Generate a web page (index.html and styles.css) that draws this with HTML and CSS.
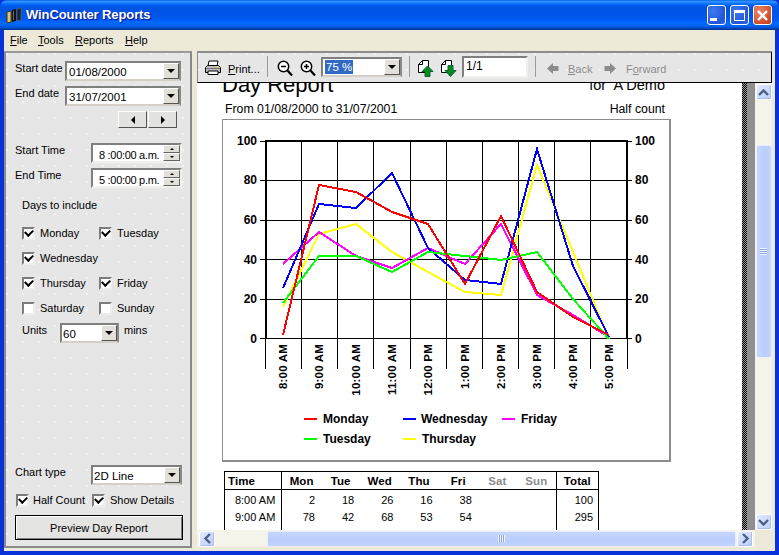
FILE: index.html
```html
<!DOCTYPE html>
<html lang="en">
<head>
<meta charset="utf-8">
<title>WinCounter Reports</title>
<link rel="stylesheet" href="styles.css">
</head>
<body>
<div class="window">
  <header class="titlebar">
    <svg class="app-icon" width="17" height="17" viewBox="0 0 17 17">
      <path d="M1 5l4-1v11l-4 1z" fill="#e8c84a" stroke="#333"/>
      <path d="M6 3l4-1v12l-4 1z" fill="#111"/>
      <path d="M11 2l4-1v12l-4 1z" fill="#222" stroke="#777" stroke-width=".5"/>
      <path d="M7 4h1v9H7z" fill="#666"/>
    </svg>
    <span class="app-title">WinCounter Reports</span>
    <div class="caption-buttons">
      <button class="cap cap-min"><span class="glyph-min"></span></button>
      <button class="cap cap-max"><span class="glyph-max"></span></button>
      <button class="cap cap-close">
        <svg width="13" height="13" viewBox="0 0 13 13"><path d="M2 2l9 9M11 2l-9 9" stroke="#fff" stroke-width="2.4"/></svg>
      </button>
    </div>
  </header>

  <nav class="menubar">
    <span class="menu-item"><u>F</u>ile</span>
    <span class="menu-item"><u>T</u>ools</span>
    <span class="menu-item"><u>R</u>eports</span>
    <span class="menu-item"><u>H</u>elp</span>
  </nav>

  <div class="main">
    <aside class="panel">
      <div class="row row-date">
        <label class="lbl lbl-date">Start date</label>
        <div class="combo combo-date"><span class="combo-text">01/08/2000</span><span class="combo-btn"><i class="arrow-down"></i></span></div>
      </div>
      <div class="row row-date gap5">
        <label class="lbl lbl-date">End date</label>
        <div class="combo combo-date"><span class="combo-text">31/07/2001</span><span class="combo-btn"><i class="arrow-down"></i></span></div>
      </div>
      <div class="nav-buttons">
        <button class="nav-btn"><i class="arrow-left"></i></button>
        <button class="nav-btn"><i class="arrow-right"></i></button>
      </div>

      <div class="row row-time first-time">
        <label class="lbl lbl-time">Start Time</label>
        <div class="spin"><span class="spin-text">8 :00:00 a.m.</span><span class="spin-btns"><b class="spin-btn"><i class="tiny-up"></i></b><b class="spin-btn"><i class="tiny-down"></i></b></span></div>
      </div>
      <div class="row row-time gap5">
        <label class="lbl lbl-time">End Time</label>
        <div class="spin"><span class="spin-text">5 :00:00 p.m.</span><span class="spin-btns"><b class="spin-btn"><i class="tiny-up"></i></b><b class="spin-btn"><i class="tiny-down"></i></b></span></div>
      </div>

      <div class="days-title">Days to include</div>
      <div class="check-row first-check">
        <span class="check col1 on"></span><span class="check-label w78">Monday</span>
        <span class="check on"></span><span class="check-label">Tuesday</span>
      </div>
      <div class="check-row">
        <span class="check col1 on"></span><span class="check-label">Wednesday</span>
      </div>
      <div class="check-row">
        <span class="check col1 on"></span><span class="check-label w78">Thursday</span>
        <span class="check on"></span><span class="check-label">Friday</span>
      </div>
      <div class="check-row">
        <span class="check col1"></span><span class="check-label w78">Saturday</span>
        <span class="check"></span><span class="check-label">Sunday</span>
      </div>
      <div class="units-row">
        <label class="lbl lbl-units">Units</label>
        <div class="combo combo-units"><span class="combo-text tight">60</span><span class="combo-btn"><i class="arrow-down"></i></span></div>
        <span class="lbl lbl-mins">mins</span>
      </div>

      <div class="panel-bottom">
        <div class="row row-time">
          <label class="lbl lbl-time">Chart type</label>
          <div class="combo combo-chart"><span class="combo-text tight">2D Line</span><span class="combo-btn"><i class="arrow-down"></i></span></div>
        </div>
        <div class="check-row bottom-check">
          <span class="check col0 on"></span><span class="check-label w59">Half Count</span>
          <span class="check on"></span><span class="check-label">Show Details</span>
        </div>
        <button class="preview">Preview Day Report</button>
      </div>
    </aside>

    <section class="viewer">
      <div class="toolbar">
        <svg class="tb-print tb-icon" width="18" height="16" viewBox="0 0 18 16">
          <path d="M5 1h9l-1 5H4z" fill="#fff" stroke="#000"/>
          <path d="M1.500 7.500l2-2h11l2 2v5h-15z" fill="#bbb" stroke="#000"/>
          <path d="M4 11h10v3.500H4z" fill="#fff" stroke="#000"/>
          <path d="M2 8h14v1H2z" fill="#777"/><path d="M12 7h3v1h-3z" fill="#e8d030"/>
        </svg>
        <span class="tb-text tb-print-label"><u>P</u>rint...</span>
        <span class="tb-sep sep-a"></span>
        <svg class="tb-zoom1 tb-icon" width="16" height="17" viewBox="0 0 16 17">
          <circle cx="6.500" cy="6.500" r="5.200" fill="#fff" stroke="#000" stroke-width="1.500"/>
          <path d="M4 6.500h5" stroke="#000" stroke-width="1.500"/>
          <path d="M10.500 10.500l4.500 5" stroke="#000" stroke-width="2.200"/>
        </svg>
        <svg class="tb-zoom2 tb-icon" width="16" height="17" viewBox="0 0 16 17">
          <circle cx="6.500" cy="6.500" r="5.200" fill="#fff" stroke="#000" stroke-width="1.500"/>
          <path d="M4 6.500h5M6.500 4v5" stroke="#000" stroke-width="1.500"/>
          <path d="M10.500 10.500l4.500 5" stroke="#000" stroke-width="2.200"/>
        </svg>
        <div class="combo combo-zoom"><span class="combo-text sel-wrap"><span class="selected">75 %</span></span><span class="combo-btn"><i class="arrow-down"></i></span></div>
        <span class="tb-sep sep-b"></span>
        <svg class="tb-page1 tb-icon" width="17" height="17" viewBox="0 0 17 17">
          <path d="M1.500 4.500l4-4h6v12h-10z" fill="#fff" stroke="#000"/>
          <path d="M1.500 4.500h4v-4" fill="none" stroke="#000"/>
          <path d="M10.500 6l5.500 5.500h-3v5h-5v-5H5z" fill="#0a8a1e" stroke="#063"/>
        </svg>
        <svg class="tb-page2 tb-icon" width="17" height="17" viewBox="0 0 17 17">
          <path d="M1.500 4.500l4-4h6v12h-10z" fill="#fff" stroke="#000"/>
          <path d="M1.500 4.500h4v-4" fill="none" stroke="#000"/>
          <path d="M8 5.500h5v5h3l-5.500 6-5.500-6h3z" fill="#0a8a1e" stroke="#063"/>
        </svg>
        <div class="page-field">1/1</div>
        <span class="tb-sep sep-c"></span>
        <svg class="tb-back tb-icon" width="12" height="11" viewBox="0 0 12 11"><path d="M0 5.500L6 0v3h5.500v5H6v3z" fill="#8c8c8c"/></svg>
        <span class="tb-text disabled tb-back-label"><u>B</u>ack</span>
        <svg class="tb-fwd tb-icon" width="12" height="11" viewBox="0 0 12 11"><path d="M12 5.500L6 0v3H.5v5H6v3z" fill="#8c8c8c"/></svg>
        <span class="tb-text disabled tb-fwd-label">F<u>o</u>rward</span>
      </div>

      <div class="doc-grid">
        <div class="doc">
          <div class="page">
            <div class="page-head">
              <span class="report-title">Day Report</span>
              <span class="report-for">for&nbsp; A Demo</span>
            </div>
            <div class="page-sub">
              <span>From 01/08/2000 to 31/07/2001</span>
              <span>Half count</span>
            </div>
            <div class="chart-box">
              <svg class="chart" width="446" height="340" viewBox="223 120 446 340">
                <g class="grid-lines">
                  <path d="M265 180.500H627M265 220.500H627M265 259.500H627M265 299.500H627M265 338.500H627"/>
                  <path d="M301.500 141V369M337.500 141V369M373.500 141V369M410.500 141V369M446.500 141V369M482.500 141V369M518.500 141V369M554.500 141V369M590.500 141V369M265.500 339V369M627.500 339V369"/>
                  <path d="M260 141H265M260 180.500H265M260 220.500H265M260 259.500H265M260 299.500H265M260 338.500H265M627 141H632M627 180.500H632M627 220.500H632M627 259.500H632M627 299.500H632M627 338.500H632"/>
                </g>
                <path class="axis" d="M265 141H628M266 141V339M627 141V339"/>

                <g class="val-left">
                  <text x="257" y="145">100</text><text x="257" y="184">80</text><text x="257" y="224">60</text><text x="257" y="264">40</text><text x="257" y="303">20</text><text x="257" y="343">0</text>
                </g>
                <g class="val-right">
                  <text x="635" y="145">100</text><text x="635" y="184">80</text><text x="635" y="224">60</text><text x="635" y="264">40</text><text x="635" y="303">20</text><text x="635" y="343">0</text>
                </g>

                <g class="cat">
                  <text transform="translate(287 344) rotate(-90)">8:00 AM</text>
                  <text transform="translate(323 344) rotate(-90)">9:00 AM</text>
                  <text transform="translate(360 344) rotate(-90)">10:00 AM</text>
                  <text transform="translate(396 344) rotate(-90)">11:00 AM</text>
                  <text transform="translate(432 344) rotate(-90)">12:00 PM</text>
                  <text transform="translate(469 344) rotate(-90)">1:00 PM</text>
                  <text transform="translate(505 344) rotate(-90)">2:00 PM</text>
                  <text transform="translate(541 344) rotate(-90)">3:00 PM</text>
                  <text transform="translate(577 344) rotate(-90)">4:00 PM</text>
                  <text transform="translate(613 344) rotate(-90)">5:00 PM</text>
                </g>

                <polyline class="s-thu" points="283,307 319,234 356,224 392,252 428,272 465,292 501,295 537,165 573,252 609,339"/>
                <polyline class="s-fri" points="283,264 319,232 356,256 392,268 428,248 465,264 501,224 537,295 573,315 609,337"/>
                <polyline class="s-wed" points="283,288 319,204 356,208 392,173 428,248 465,280 501,284 537,149 573,266 609,337"/>
                <polyline class="s-tue" points="283,303 319,256 356,256 392,272 428,252 465,256 501,260 537,252 573,299 609,339"/>
                <polyline class="s-mon" points="283,335 319,185 356,192 392,212 428,224 465,284 501,216 537,292 573,317 609,335"/>

                <g class="legend">
                  <path class="s-mon" d="M304 419H317"/><text x="323" y="423">Monday</text>
                  <path class="s-tue" d="M304 439H317"/><text x="323" y="443">Tuesday</text>
                  <path class="s-wed" d="M403 419H416"/><text x="421" y="423">Wednesday</text>
                  <path class="s-thu" d="M403 439H416"/><text x="422" y="443">Thursday</text>
                  <path class="s-fri" d="M502 419H515"/><text x="521" y="423">Friday</text>
                </g>
              </svg>
            </div>

            <table class="data">
              <thead>
                <tr><th class="c-time">Time</th><th class="c-day">Mon</th><th class="c-day">Tue</th><th class="c-day">Wed</th><th class="c-day">Thu</th><th class="c-day">Fri</th><th class="c-day off">Sat</th><th class="c-day off">Sun</th><th class="c-total">Total</th></tr>
              </thead>
              <tbody>
                <tr><td class="c-time">8:00 AM</td><td>2</td><td>18</td><td>26</td><td>16</td><td>38</td><td></td><td></td><td class="c-total">100</td></tr>
                <tr><td class="c-time">9:00 AM</td><td>78</td><td>42</td><td>68</td><td>53</td><td>54</td><td></td><td></td><td class="c-total">295</td></tr>
                <tr><td class="c-time"></td><td></td><td></td><td></td><td></td><td></td><td></td><td></td><td class="c-total"></td></tr>
              </tbody>
            </table>
          </div>
          <div class="dark-band"></div>
          <div class="gray-band"></div>
        </div>

        <div class="vscroll">
          <span class="sb-btn"><svg width="11" height="7" viewBox="0 0 11 7"><path d="M1 6l4.500-4.500L10 6" fill="none" stroke="#4d6185" stroke-width="2.400"/></svg></span>
          <span class="v-track-a"></span>
          <span class="v-thumb"><i class="grip-h"></i></span>
          <span class="v-track-b"></span>
          <span class="sb-btn"><svg width="11" height="7" viewBox="0 0 11 7"><path d="M1 1l4.500 4.500L10 1" fill="none" stroke="#4d6185" stroke-width="2.400"/></svg></span>
        </div>

        <div class="hscroll">
          <span class="sb-btn"><svg width="7" height="11" viewBox="0 0 7 11"><path d="M6 1L1.500 5.500 6 10" fill="none" stroke="#4d6185" stroke-width="2.400"/></svg></span>
          <span class="h-track-a"></span>
          <span class="h-thumb"><i class="grip-v"></i></span>
          <span class="sb-btn h-right"><svg width="7" height="11" viewBox="0 0 7 11"><path d="M1 1l4.500 4.500L1 10" fill="none" stroke="#4d6185" stroke-width="2.400"/></svg></span>
        </div>
        <div class="corner"></div>
      </div>
    </section>
  </div>
</div>
</body>
</html>
```

FILE: styles.css
```css
* { box-sizing: border-box; }
html, body { margin: 0; padding: 0; }
body { width: 779px; height: 555px; overflow: hidden; background: #0831d9; }
button { font: inherit; color: inherit; padding: 0; margin: 0; }

.window {
  width: 779px; height: 555px;
  display: flex; flex-direction: column;
  font: 11px/14px "Liberation Sans", Arial, sans-serif;
  color: #000;
  background: #0831d9;
  border-radius: 7px 7px 0 0;
  overflow: hidden;
  padding-bottom: 4px;
}

/* title bar */
.titlebar {
  height: 30px; flex: none;
  display: flex; align-items: center;
  padding-left: 6px;
  background: linear-gradient(#0058ee 0, #3593ff 4%, #288eff 7%, #127dff 10%, #036ffc 13%, #0262ee 17%, #0057e5 22%, #0054e3 30%, #0055eb 56%, #005bf5 66%, #026afe 76%, #0062ef 86%, #0052d6 92%, #0040ab 96%, #003092 100%);
}
.app-icon { flex: none; }
.app-title {
  margin-left: 3px;
  font: bold 13px/16px "Liberation Sans", Arial, sans-serif;
  letter-spacing: -.1px;
  color: #fff;
  text-shadow: 1px 1px 1px #0f1089;
}
.caption-buttons { margin-left: auto; margin-right: 7px; display: flex; gap: 4px; }
.cap {
  width: 19px; height: 20px;
  border: 1px solid #fff; border-radius: 3px;
  display: flex; align-items: center; justify-content: center;
  background: radial-gradient(circle at 30% 30%, #3f7bf0, #2455d8 70%, #3a6be6);
}
.cap-close { background: radial-gradient(circle at 30% 30%, #e88a6d, #d3512d 65%, #c23a17); }
.glyph-min { width: 7px; height: 3px; background: #fff; margin: 9px 6px 0 0; }
.glyph-max { width: 11px; height: 11px; border: 1px solid #fff; border-top-width: 3px; }

/* menu */
.menubar {
  height: 20px; flex: none;
  margin: 0 4px;
  padding-left: 6px;
  display: flex; align-items: center;
  background: #ece9d8;
}
.menu-item:nth-child(1) { width: 28px; }
.menu-item:nth-child(2) { width: 37px; }
.menu-item:nth-child(3) { width: 50px; }

.main {
  flex: 1; min-height: 0;
  margin: 0 4px;
  padding: 1px 3px 3px 0;
  display: flex;
  background: #ece9d8;
}

/* left panel */
.panel {
  width: 188px; flex: none;
  display: flex; flex-direction: column;
  padding: 8px 0 6px 9px;
  border: 2px solid #8a8a8a;
  border-top-color: #9a9a9a;
  background-color: #e6e6e6;
  background-image: radial-gradient(circle at 1px 1px, #f1f1f1 1px, transparent 1.2px);
  background-size: 16px 16px;
}
.row { display: flex; height: 20px; flex: none; }
.gap5 { margin-top: 5px; }
.lbl { display: block; white-space: nowrap; }
.lbl-date { width: 50px; }
.lbl-time { width: 76px; }
.first-time { margin-top: 15px; }

.combo {
  display: flex; height: 20px; flex: none;
  background: #fff;
  border: 2px solid #7f7f7f;
  border-bottom-color: #d4d0c8;
  border-right-color: #8a8a8a;
}
.combo-date { width: 116px; }
.combo-units { width: 59px; }
.combo-chart { width: 91px; }
.combo-zoom { width: 81px; }
.combo-text { flex: 1; padding: 2px 0 0 2px; white-space: nowrap; font-size: 11.5px; }
.tight { padding-left: 1px; }
.combo-btn {
  width: 16px; flex: none;
  display: flex; align-items: center; justify-content: center;
  background: #e2e0d8;
  border: 1px solid;
  border-color: #fff #555 #555 #fff;
}
.arrow-down { width: 0; height: 0; border: 4px solid transparent; border-top: 4px solid #000; border-bottom: 0; }

.nav-buttons { display: flex; margin: 5px 0 0 103px; gap: 1px; }
.nav-btn {
  height: 17px; width: 29px;
  display: flex; align-items: center; justify-content: center;
  background: #e2e2e0;
  border: 1px solid;
  border-color: #fff #555 #555 #fff;
}
.arrow-left { width: 0; height: 0; border: 4px solid transparent; border-right: 4px solid #000; border-left: 0; }
.arrow-right { width: 0; height: 0; border: 4px solid transparent; border-left: 4px solid #000; border-right: 0; }

.spin {
  width: 91px; height: 20px;
  display: flex;
  background: #fff;
  border: 2px solid #7f7f7f;
  border-bottom-color: #f0f0ec;
  border-right-color: #f0f0ec;
}
.spin-text { flex: 1; padding: 3px 0 0 6px; white-space: nowrap; letter-spacing: -.3px; }
.spin-btns { width: 17px; flex: none; display: flex; flex-direction: column; }
.spin-btn {
  flex: 1;
  display: flex; align-items: center; justify-content: center;
  background: #e2e0d8;
  border: 1px solid;
  border-color: #fff #666 #666 #fff;
}
.tiny-up { width: 0; height: 0; border: 2px solid transparent; border-bottom: 2px solid #000; border-top: 0; }
.tiny-down { width: 0; height: 0; border: 2px solid transparent; border-top: 2px solid #000; border-bottom: 0; }

.days-title { margin: 10px 0 0 7px; height: 14px; }

.check-row { display: flex; align-items: center; height: 16px; margin-top: 9px; flex: none; }
.first-check { margin-top: 13px; }
.check {
  width: 13px; height: 13px; flex: none;
  background: #fff;
  border: 2px solid #7c7c7c;
  border-bottom-color: #eee;
  border-right-color: #eee;
  position: relative;
}
.col1 { margin-left: 7px; }
.col0 { margin-left: 1px; }
.check.on::after {
  content: "";
  position: absolute; left: 1px; top: 0;
  width: 6px; height: 4px;
  border-left: 2px solid #000; border-bottom: 2px solid #000;
  transform: rotate(-45deg);
}
.check-label { margin-left: 5px; white-space: nowrap; }
.w78 { width: 59px; }
.w59 { width: 59px; margin-left: 4px; }

.units-row { display: flex; height: 20px; margin-top: 7px; padding-left: 7px; flex: none; }
.lbl-units { width: 38px; }
.lbl-mins { margin-left: 5px; }

.panel-bottom { margin-top: auto; }
.bottom-check { margin-top: 7px; }
.preview {
  display: block;
  width: 168px; height: 25px;
  margin-top: 7px;
  text-align: center;
  background: #e4e4e2;
  border: 1px solid #000;
  box-shadow: inset 1px 1px 0 #fff, inset -1px -1px 0 #808080;
}

/* viewer */
.viewer {
  flex: 1; min-width: 0;
  margin-left: 5px;
  display: flex; flex-direction: column;
}
.toolbar {
  height: 32px; flex: none;
  display: flex; align-items: center;
  padding: 0 0 2px 6px;
  border-top: 2px solid #8c8c8c;
  border-left: 1px solid #8c8c8c;
  border-right: 1px solid #000;
  border-bottom: 1px solid #000;
  background-color: #e6e6e6;
  background-image: radial-gradient(circle at 1px 1px, #f1f1f1 1px, transparent 1.2px);
  background-size: 16px 16px;
}
.toolbar svg { flex: none; }
.tb-icon { margin-top: 3px; }
.tb-text { white-space: nowrap; margin-top: 4px; }
.disabled { color: #8c8c8c; }
.tb-print-label { margin-left: 6px; width: 30px; }
.tb-sep { width: 1px; height: 21px; background: #9a9a9a; flex: none; }
.sep-a { margin-left: 9px; }
.tb-zoom1 { margin-left: 9px; }
.tb-zoom2 { margin-left: 7px; }
.combo-zoom { margin-left: 5px; }
.sel-wrap { padding-top: 1px; }
.selected { background: #316ac5; color: #fff; display: inline-block; padding: 0 1px; }
.sep-b { margin-left: 7px; }
.tb-page1 { margin-left: 7px; }
.tb-page2 { margin-left: 6px; }
.page-field {
  width: 66px; height: 22px; flex: none;
  margin-left: 5px;
  padding: 1px 0 0 2px;
  font-size: 12px;
  background: #fff;
  border: 2px solid #7f7f7f;
  border-bottom-color: #f0f0ec;
  border-right-color: #f0f0ec;
}
.sep-c { margin-left: 7px; }
.tb-back { margin-left: 11px; }
.tb-back-label { margin-left: 9px; width: 25px; }
.tb-fwd { margin-left: 11px; }
.tb-fwd-label { margin-left: 10px; }

.doc-grid {
  flex: 1; min-height: 0;
  display: grid;
  grid-template-columns: 558px 17px;
  grid-template-rows: 447px 17px;
}
.doc { display: flex; overflow: hidden; background: #fff; }
.page { width: 545px; flex: none; padding-left: 25px; overflow: hidden; }
.dark-band {
  width: 5px; flex: none;
  background-color: #000;
  background-image: conic-gradient(#999 25%, #000 0 50%, #999 0 75%, #000 0);
  background-size: 2px 2px;
}
.gray-band { width: 8px; flex: none; background: #8f8f8f; }

.page-head {
  width: 443px;
  height: 22px;
  margin-top: -11px;
  display: flex; justify-content: space-between; align-items: flex-start;
  white-space: nowrap;
}
.report-title { font-size: 22px; line-height: 26px; }
.report-for { font-size: 14.5px; line-height: 18px; margin-top: 4px; }
.page-sub {
  width: 443px;
  margin-top: 8px;
  padding-left: 3px;
  height: 14px;
  display: flex; justify-content: space-between;
  font-size: 12.3px;
}
.chart-box {
  width: 449px; height: 343px;
  margin-top: 3px;
  border: 1px solid #8c8c8c;
  border-right-width: 2px; border-bottom-width: 2px;
  background: #fff;
}
.chart { display: block; }
.chart text { font: bold 12px "Liberation Sans", Arial, sans-serif; fill: #000; }
.grid-lines path { fill: none; stroke: #000; stroke-width: 1; shape-rendering: crispEdges; }
.axis { fill: none; stroke: #000; stroke-width: 2; shape-rendering: crispEdges; }
.val-left text { text-anchor: end; }
.cat text { text-anchor: end; font-size: 11.5px; letter-spacing: .2px; }
polyline, .legend path { fill: none; stroke-width: 2; shape-rendering: crispEdges; }
.s-mon { stroke: #ff0000; }
.s-tue { stroke: #00ff00; }
.s-wed { stroke: #0000ff; }
.s-thu { stroke: #ffff00; }
.s-fri { stroke: #ff00ff; }

.data {
  margin: 9px 0 0 2px;
  width: 375px;
  table-layout: fixed;
  border-collapse: collapse;
  border: 1px solid #000;
  border-bottom: 0;
}
.data th { height: 18px; padding: 0; font-size: 11.5px; letter-spacing: .1px; border-bottom: 1px solid #000; color: #000; }
.data td { height: 17px; padding: 0 6px 0 0; text-align: right; font-size: 11px; }
.data tbody tr:first-child td { height: 19px; padding-top: 2px; }
.data .c-time { width: 57px; border-right: 1px solid #000; }
.data th.c-time { text-align: left; padding-left: 3px; }
.data .c-day { width: 39px; }
.data .c-total { width: 42px; border-left: 1px solid #000; }
.data td.c-total { padding-right: 5px; }
.data .off { color: #8c8c8c; }

/* scrollbars */
.sb-btn {
  width: 16px; height: 16px; flex: none;
  display: flex; align-items: center; justify-content: center;
  border: 1px solid #fff; border-radius: 2px;
  background: linear-gradient(135deg, #e1eaff, #bbcefc);
  box-shadow: inset -1px -1px 0 #a9bdee;
}
.vscroll { display: flex; flex-direction: column; align-items: center; background: #f5f4ea; padding-top: 1px; }
.v-track-a { height: 45px; flex: none; }
.v-thumb {
  width: 16px; height: 213px; flex: none;
  border: 1px solid #e8eeff; border-radius: 2px;
  background: linear-gradient(90deg, #c6d6fd, #b9cdfd 60%, #c3d4fe);
  display: flex; align-items: center; justify-content: center;
}
.grip-h { width: 7px; height: 7px; background: repeating-linear-gradient(#eef3ff 0 1px, #8fa8dc 1px 2px); }
.v-track-b { flex: 1; }
.hscroll { display: flex; align-items: center; background: #f5f4ea; padding-left: 2px; }
.h-track-a { width: 52px; flex: none; }
.h-thumb {
  width: 469px; height: 16px; flex: none;
  border: 1px solid #e8eeff; border-radius: 2px;
  background: linear-gradient(#c6d6fd, #b9cdfd 60%, #c3d4fe);
  display: flex; align-items: center; justify-content: center;
}
.grip-v { width: 7px; height: 7px; background: repeating-linear-gradient(90deg, #eef3ff 0 1px, #8fa8dc 1px 2px); }
.h-right { margin-left: 1px; }
.corner { background: #ece9d8; }
```
